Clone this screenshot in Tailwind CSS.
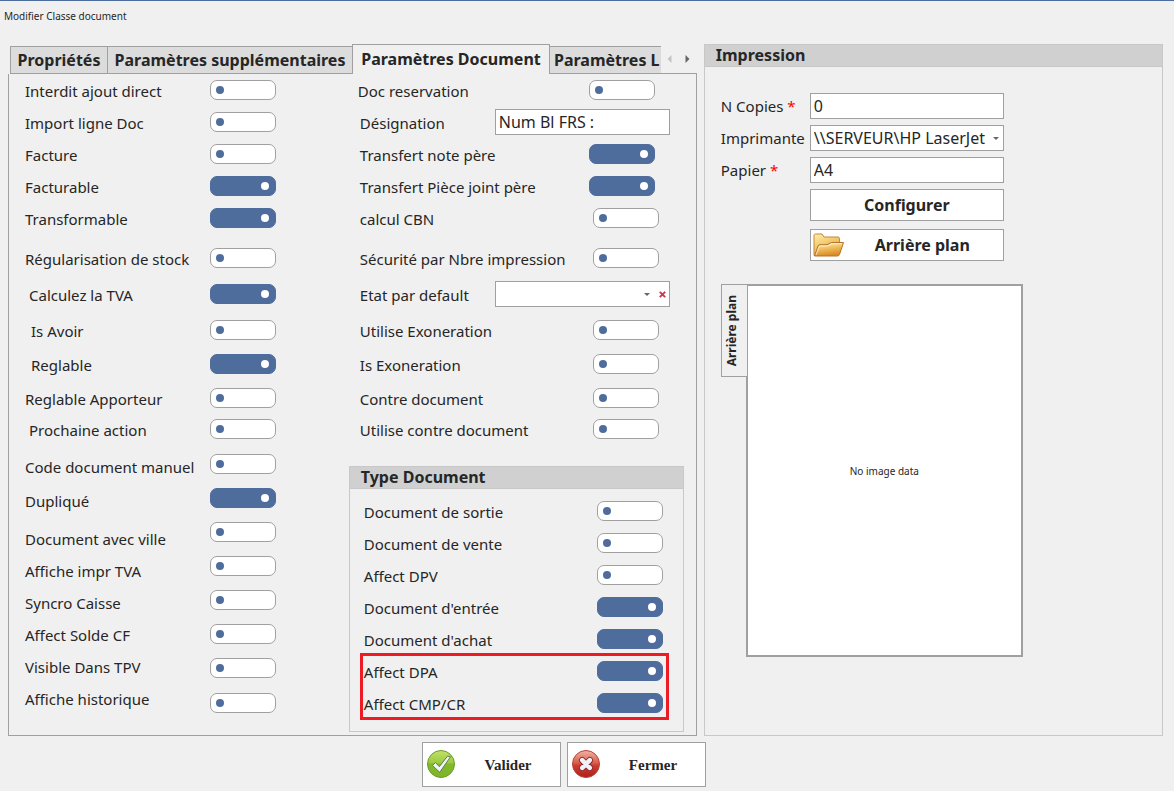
<!DOCTYPE html>
<html lang="fr">
<head>
<meta charset="utf-8">
<meta name="viewport" content="width=device-width, initial-scale=1">
<title>Modifier Classe document</title>
<script src="https://cdn.jsdelivr.net/npm/@tailwindcss/browser@4"></script>
</head>
<body class="flex min-h-screen flex-col border-t border-[#4d6c9e] bg-[#f0f0f0] font-['Noto_Sans',sans-serif] text-[15px] leading-5 text-[#262626] [&_.sw]:flex [&_.sw]:h-5 [&_.sw]:w-[66px] [&_.sw]:shrink-0 [&_.sw]:appearance-none [&_.sw]:items-center [&_.sw]:rounded-[7px] [&_.sw]:border [&_.sw]:border-[#a0a0a0] [&_.sw]:bg-white [&_.sw]:pl-[5px] [&_.sw]:before:size-2 [&_.sw]:before:rounded-full [&_.sw]:before:bg-[#4e6d9d] [&_.sw]:before:content-[''] [&_.sw:checked]:border-[#4e6d9d] [&_.sw:checked]:bg-[#4e6d9d] [&_.sw:checked]:pl-[50px] [&_.sw:checked]:before:bg-white">

<header class="flex h-[43px] shrink-0 items-start px-1 pt-[7px]">
  <h1 class="text-[10px] leading-4">Modifier Classe document</h1>
</header>

<main class="grid grid-cols-[3fr_2fr] gap-[7px] pr-[11px] pl-2">

  <section class="flex min-w-0 flex-col">
    <!-- Tab strip -->
    <div class="flex h-[30px] items-end pl-0.5">
      <div role="tablist" class="flex min-w-0 flex-1 items-end overflow-hidden text-base font-bold whitespace-nowrap">
        <button role="tab" type="button" class="h-7 w-[98px] shrink-0 border border-[#a0a0a0] bg-[#dcdcdc]">Propriétés</button>
        <button role="tab" type="button" class="h-7 w-[244px] shrink-0 border-y border-[#a0a0a0] bg-[#dcdcdc]">Paramètres supplémentaires</button>
        <button role="tab" type="button" aria-selected="true" class="h-[30px] w-[198px] shrink-0 border border-b-0 border-[#a0a0a0] bg-[#f0f0f0] pb-0.5">Paramètres Document</button>
        <button role="tab" type="button" class="h-7 flex-1 border-y border-[#a0a0a0] bg-[#dcdcdc] pl-1 text-left">Paramètres L</button>
      </div>
      <div class="flex h-[30px] w-9 shrink-0 items-center gap-[13px] border-b border-[#a0a0a0] pl-1.5">
        <button type="button" aria-label="Onglet précédent"><svg class="h-2 w-[5px]" viewBox="0 0 5 8"><path d="M4.500 0 0.500 4l4 4z" fill="#c3c3c3"/></svg></button>
        <button type="button" aria-label="Onglet suivant"><svg class="h-2 w-[5px]" viewBox="0 0 5 8"><path d="M0.500 0l4 4-4 4z" fill="#666"/></svg></button>
      </div>
    </div>

    <div class="flex flex-1 border border-t-0 border-[#a0a0a0] pb-[3px]">
      <!-- First settings column -->
      <div class="flex flex-1 pt-[7px] pl-4">
        <div class="flex w-[185px] flex-col whitespace-nowrap *:h-5">
          <label for="a1">Interdit ajout direct</label>
          <label for="a2" class="mt-3">Import ligne Doc</label>
          <label for="a3" class="mt-3">Facture</label>
          <label for="a4" class="mt-3">Facturable</label>
          <label for="a5" class="mt-3">Transformable</label>
          <label for="a6" class="mt-5">Régularisation de stock</label>
          <label for="a7" class="mt-4 pl-1">Calculez la TVA</label>
          <label for="a8" class="mt-4 pl-1.5">Is Avoir</label>
          <label for="a9" class="mt-3.5 pl-1.5">Reglable</label>
          <label for="a10" class="mt-3.5">Reglable Apporteur</label>
          <label for="a11" class="mt-[11px] pl-1">Prochaine action</label>
          <label for="a12" class="mt-[17px]">Code document manuel</label>
          <label for="a13" class="mt-3.5">Dupliqué</label>
          <label for="a14" class="mt-[18px]">Document avec ville</label>
          <label for="a15" class="mt-3">Affiche impr TVA</label>
          <label for="a16" class="mt-3">Syncro Caisse</label>
          <label for="a17" class="mt-3">Affect Solde CF</label>
          <label for="a18" class="mt-3">Visible Dans TPV</label>
          <label for="a19" class="mt-3">Affiche historique</label>
        </div>
        <div class="-mt-px flex flex-col">
          <input type="checkbox" role="switch" id="a1" class="sw">
          <input type="checkbox" role="switch" id="a2" class="sw mt-3">
          <input type="checkbox" role="switch" id="a3" class="sw mt-3">
          <input type="checkbox" role="switch" id="a4" class="sw mt-3" checked>
          <input type="checkbox" role="switch" id="a5" class="sw mt-3" checked>
          <input type="checkbox" role="switch" id="a6" class="sw mt-5">
          <input type="checkbox" role="switch" id="a7" class="sw mt-4" checked>
          <input type="checkbox" role="switch" id="a8" class="sw mt-4">
          <input type="checkbox" role="switch" id="a9" class="sw mt-3.5" checked>
          <input type="checkbox" role="switch" id="a10" class="sw mt-3.5">
          <input type="checkbox" role="switch" id="a11" class="sw mt-[11px]">
          <input type="checkbox" role="switch" id="a12" class="sw mt-[15px]">
          <input type="checkbox" role="switch" id="a13" class="sw mt-3.5" checked>
          <input type="checkbox" role="switch" id="a14" class="sw mt-3.5">
          <input type="checkbox" role="switch" id="a15" class="sw mt-3.5">
          <input type="checkbox" role="switch" id="a16" class="sw mt-3.5">
          <input type="checkbox" role="switch" id="a17" class="sw mt-3.5">
          <input type="checkbox" role="switch" id="a18" class="sw mt-3.5">
          <input type="checkbox" role="switch" id="a19" class="sw mt-[15px]">
        </div>
      </div>

      <!-- Second settings column -->
      <div class="mr-3 flex w-[335px] shrink-0 flex-col pt-[3px]">
        <div class="flex flex-col pr-3.5 pl-[11px] whitespace-nowrap *:flex *:h-[26px] *:items-center *:justify-between [&_label]:pt-0.5">
          <div class="-ml-0.5"><label for="b1">Doc reservation</label><input type="checkbox" role="switch" id="b1" class="sw mr-[15px]"></div>
          <div class="mt-1.5"><label for="b2">Désignation</label><input type="text" id="b2" value="Num Bl FRS :" class="h-[26px] w-[175px] border border-[#a0a0a0] bg-white px-[3px] text-base"></div>
          <div class="mt-1.5"><label for="b3">Transfert note père</label><input type="checkbox" role="switch" id="b3" class="sw mr-[15px]" checked></div>
          <div class="mt-1.5"><label for="b4">Transfert Pièce joint père</label><input type="checkbox" role="switch" id="b4" class="sw mr-[15px]" checked></div>
          <div class="mt-1.5"><label for="b5">calcul CBN</label><input type="checkbox" role="switch" id="b5" class="sw mr-[11px]"></div>
          <div class="mt-3.5"><label for="b6">Sécurité par Nbre impression</label><input type="checkbox" role="switch" id="b6" class="sw mr-[11px]"></div>
          <div class="mt-2.5"><label for="b7">Etat par default</label>
            <div class="relative">
              <select id="b7" class="block h-[26px] w-[175px] appearance-none border border-[#a0a0a0] bg-white pr-9 pl-[3px] text-base"><option></option></select>
              <svg class="pointer-events-none absolute top-3 right-5 h-[3px] w-[6px]" viewBox="0 0 6 3"><path d="M0 0h6L3 3z" fill="#666"/></svg>
              <button type="button" aria-label="Effacer" class="absolute top-2.5 right-1"><svg class="block size-[7px]" viewBox="0 0 7 7"><path d="M.8.800l5.400 5.400M6.200.800.800 6.200" stroke="#d0344a" stroke-width="1.900"/></svg></button>
            </div>
          </div>
          <div class="mt-2.5"><label for="b8">Utilise Exoneration</label><input type="checkbox" role="switch" id="b8" class="sw mr-[11px]"></div>
          <div class="mt-2"><label for="b9">Is Exoneration</label><input type="checkbox" role="switch" id="b9" class="sw mr-[11px]"></div>
          <div class="mt-2"><label for="b10">Contre document</label><input type="checkbox" role="switch" id="b10" class="sw mr-[11px]"></div>
          <div class="mt-[5px]"><label for="b11">Utilise contre document</label><input type="checkbox" role="switch" id="b11" class="sw mr-[11px]"></div>
        </div>

        <!-- Document type group -->
        <section class="mt-6 flex flex-col border border-[#c8c8c8] pb-[11px]">
          <h2 class="h-[22px] border-b border-[#c8c8c8] bg-[#d0d0d0] pl-[11px] text-base leading-[21px] font-bold">Type Document</h2>
          <div class="mt-1.5 flex flex-col px-2.5 whitespace-nowrap [&_label]:pt-0.5">
            <div class="flex h-8 items-center justify-between pr-2.5 pl-1"><label for="c1">Document de sortie</label><input type="checkbox" role="switch" id="c1" class="sw"></div>
            <div class="flex h-8 items-center justify-between pr-2.5 pl-1"><label for="c2">Document de vente</label><input type="checkbox" role="switch" id="c2" class="sw"></div>
            <div class="flex h-8 items-center justify-between pr-2.5 pl-1"><label for="c3">Affect DPV</label><input type="checkbox" role="switch" id="c3" class="sw"></div>
            <div class="flex h-8 items-center justify-between pr-2.5 pl-1"><label for="c4">Document d'entrée</label><input type="checkbox" role="switch" id="c4" class="sw" checked></div>
            <div class="flex h-[30px] items-center justify-between pt-0.5 pr-2.5 pl-1"><label for="c5">Document d'achat</label><input type="checkbox" role="switch" id="c5" class="sw" checked></div>
            <div class="mr-1 border-3 border-[#ed1c24]">
              <div class="flex h-[30px] items-center justify-between pr-[3px] pl-px"><label for="c6">Affect DPA</label><input type="checkbox" role="switch" id="c6" class="sw" checked></div>
              <div class="flex h-[31px] items-center justify-between pt-0.5 pr-[3px] pl-px"><label for="c7">Affect CMP/CR</label><input type="checkbox" role="switch" id="c7" class="sw" checked></div>
            </div>
          </div>
        </section>
      </div>
    </div>
  </section>

  <!-- Printing group -->
  <section class="flex min-w-0 flex-col border border-[#c8c8c8]">
    <h2 class="h-[22px] border-b border-[#c8c8c8] bg-[#d0d0d0] pl-[11px] text-base leading-[21px] font-bold">Impression</h2>
    <div class="mt-[26px] grid grid-cols-[89px_194px] items-center gap-y-1.5 pl-4 whitespace-nowrap">
      <label for="d1">N Copies <span class="text-[#ff0000]">*</span></label>
      <input type="text" id="d1" value="0" class="h-[26px] border border-[#a0a0a0] bg-white px-[3px] text-base">
      <label for="d2">Imprimante</label>
      <div class="relative">
        <select id="d2" class="block h-[26px] w-full appearance-none border border-[#a0a0a0] bg-white pl-[3px] text-base"><option>\\SERVEUR\HP LaserJet</option></select>
        <svg class="pointer-events-none absolute top-3 right-[5px] h-[3px] w-[6px]" viewBox="0 0 6 3"><path d="M0 0h6L3 3z" fill="#666"/></svg>
      </div>
      <label for="d3">Papier <span class="text-[#ff0000]">*</span></label>
      <input type="text" id="d3" value="A4" class="h-[26px] border border-[#a0a0a0] bg-white px-[3px] text-base">
      <button type="button" class="col-start-2 h-8 border border-[#a0a0a0] bg-white text-base font-bold">Configurer</button>
      <button type="button" class="col-start-2 mt-0.5 flex h-8 items-center border border-[#a0a0a0] bg-white pl-0.5 text-base font-bold">
        <svg class="h-6 w-[31px] shrink-0" viewBox="0 0 31 24">
          <defs>
            <linearGradient id="fb" x1="0" y1="0" x2="0.500" y2="1"><stop offset="0" stop-color="#fff0a8"/><stop offset="1" stop-color="#e5a53a"/></linearGradient>
            <linearGradient id="ff" x1="0" y1="0" x2="0.300" y2="1"><stop offset="0" stop-color="#fff3bd"/><stop offset="0.500" stop-color="#f0c062"/><stop offset="1" stop-color="#d98c26"/></linearGradient>
          </defs>
          <path d="M1 22.500V2.500Q1 1 2.500 1H9l2 3H25q1.500 0 1.500 1.500V20L5 22.500z" fill="url(#fb)" stroke="#c08740"/>
          <path d="M1.500 23 5 13q.5-1.300 2-1.300h7l4.500-2.200h12L26.500 21.500Q26 23 24.500 23z" fill="url(#ff)" stroke="#b87328"/>
          <path d="M3 22 6 14q.3-1 1.500-1h7L19 10.700h10" fill="none" stroke="#fffbe6" stroke-opacity="0.700"/>
        </svg>
        <span class="flex-1 pr-0.5">Arrière plan</span>
      </button>
    </div>

    <div class="mt-[23px] flex items-start pl-4">
      <button type="button" class="relative -mr-0.5 flex h-[93px] w-[27px] items-center justify-center border border-[#a0a0a0] bg-[#f0f0f0] pr-1 text-xs font-bold"><span class="rotate-180 [writing-mode:vertical-rl]">Arrière plan</span></button>
      <div class="flex h-[373px] w-[277px] items-center justify-center border-2 border-[#a0a0a0] bg-white text-[10px] leading-4">No image data</div>
    </div>
  </section>
</main>

<footer class="flex gap-1.5 pt-1.5 pl-[422px] font-['Liberation_Serif',serif] text-[15px] font-bold">
  <button type="button" class="flex h-[45px] w-[139px] items-center border border-[#a0a0a0] bg-white pl-1">
    <svg class="size-[29px] shrink-0" viewBox="0 0 29 29">
      <defs><linearGradient id="gg" x1="0" y1="0" x2="0" y2="1"><stop offset="0" stop-color="#c3e06a"/><stop offset="0.450" stop-color="#9ccb3f"/><stop offset="0.500" stop-color="#84b82c"/><stop offset="1" stop-color="#7db52a"/></linearGradient></defs>
      <circle cx="14" cy="14" r="13.500" fill="url(#gg)" stroke="#6a9a2c"/>
      <path d="M5.500 15.500 8.500 12.500l3.800 4.200L20.500 6.200l3 .6L12.700 22.300z" fill="#f1f5fa" stroke="#5f7f48" stroke-linejoin="round"/>
    </svg>
    <span class="flex-1">Valider</span>
  </button>
  <button type="button" class="flex h-[45px] w-[139px] items-center border border-[#a0a0a0] bg-white pl-1">
    <svg class="size-[29px] shrink-0" viewBox="0 0 29 29">
      <defs><linearGradient id="rg" x1="0" y1="0" x2="0" y2="1"><stop offset="0" stop-color="#f0b5a5"/><stop offset="0.450" stop-color="#d9604c"/><stop offset="0.550" stop-color="#cc3f31"/><stop offset="1" stop-color="#b01d1a"/></linearGradient></defs>
      <circle cx="14" cy="14" r="13.500" fill="url(#rg)" stroke="#b5443a"/>
      <path d="M10.200 10.200l7.600 7.600M17.800 10.200l-7.600 7.600" stroke="#8f2a2c" stroke-width="6.500" stroke-linecap="round"/>
      <path d="M10.200 10.200l7.600 7.600M17.800 10.200l-7.600 7.600" stroke="#eef2f9" stroke-width="4.500" stroke-linecap="round"/>
    </svg>
    <span class="flex-1">Fermer</span>
  </button>
</footer>
</body>
</html>
